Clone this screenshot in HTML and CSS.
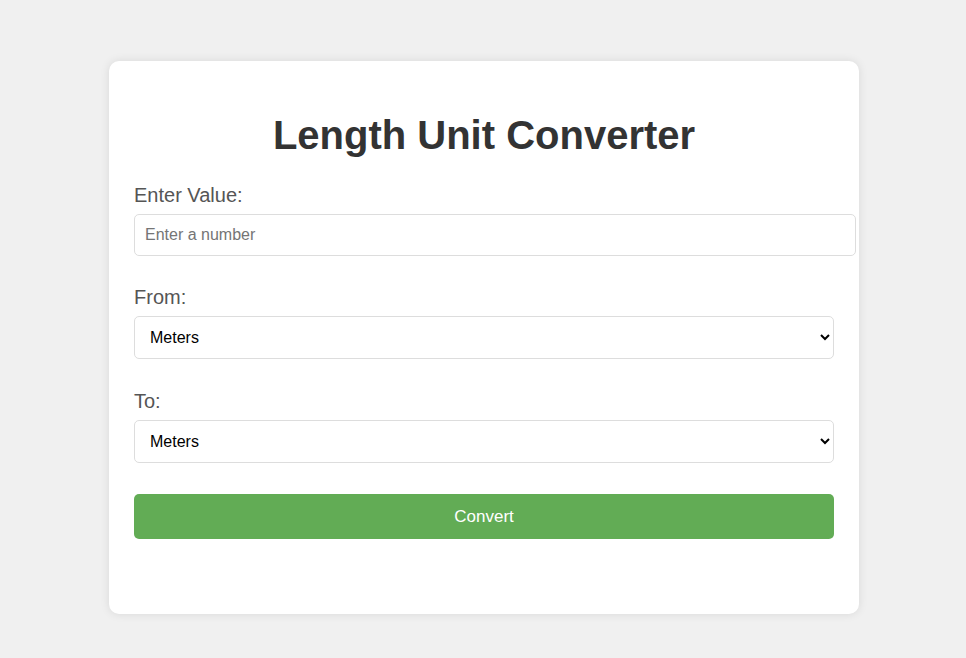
FILE: index.html
```html
<!DOCTYPE html>
<html lang="en">
<head>
<meta charset="utf-8">
<title>Length Unit Converter</title>
<link rel="stylesheet" href="styles.css">
</head>
<body>
<div class="card">
  <h1 class="title">Length Unit Converter</h1>
  <div class="group">
    <label class="label" for="value">Enter Value:</label>
    <input class="input" id="value" type="number" placeholder="Enter a number">
  </div>
  <div class="group group-select">
    <label class="label" for="from">From:</label>
    <select class="select" id="from">
      <option>Meters</option>
      <option>Kilometers</option>
      <option>Centimeters</option>
      <option>Feet</option>
      <option>Inches</option>
    </select>
  </div>
  <div class="group group-select">
    <label class="label" for="to">To:</label>
    <select class="select" id="to">
      <option>Meters</option>
      <option>Kilometers</option>
      <option>Centimeters</option>
      <option>Feet</option>
      <option>Inches</option>
    </select>
  </div>
  <button class="button" type="button">Convert</button>
  <div class="result"></div>
</div>
</body>
</html>
```
FILE: styles.css
```css
html, body {
  margin: 0;
  padding: 0;
}
body {
  background: #f0f0f0;
  font-family: "Liberation Sans", Arial, sans-serif;
  padding-top: 61px;
  height: 658px;
  box-sizing: border-box;
}
.card {
  width: 750px;
  box-sizing: border-box;
  margin-left: 109px;
  background: #fff;
  border-radius: 10px;
  box-shadow: 0 0 10px rgba(0, 0, 0, 0.1);
  padding: 25px 25px 0;
  height: 553px;
}
.title {
  margin: 26px 0 26px;
  font-size: 40px;
  font-weight: bold;
  color: #333;
  text-align: center;
  line-height: 46px;
}
.group {
  margin-bottom: 30px;
}
.group-select {
  margin-bottom: 31px;
}
.label {
  display: block;
  font-size: 20px;
  color: #555;
  line-height: 23px;
  margin-bottom: 7px;
}
.input {
  display: block;
  width: 100%;
  padding: 10px;
  border: 1px solid #ddd;
  border-radius: 5px;
  font-size: 16px;
  font-family: "Liberation Sans", Arial, sans-serif;
  color: #333;
  box-sizing: content-box;
  height: 20px;
  margin: 0;
}
.input::placeholder {
  color: #757575;
}
.select {
  display: block;
  width: 100%;
  height: 43px;
  padding: 0 11px;
  border: 1px solid #ddd;
  border-radius: 5px;
  font-size: 16px;
  font-family: "Liberation Sans", Arial, sans-serif;
  color: #000;
  background: #fff;
  box-sizing: border-box;
  margin: 0;
}
.button {
  display: block;
  width: 100%;
  height: 45px;
  margin: 0;
  border: none;
  border-radius: 5px;
  background: #62ac55;
  color: #fff;
  font-size: 17px;
  font-family: "Liberation Sans", Arial, sans-serif;
}
.result {
  margin-top: 20px;
}
```
